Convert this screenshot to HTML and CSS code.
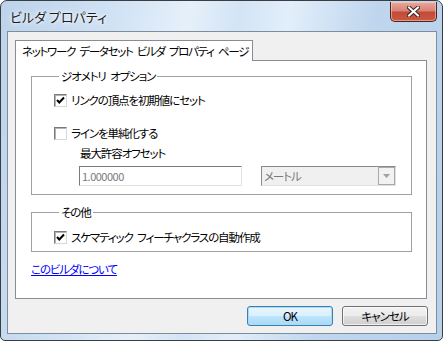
FILE: index.html
```html
<html>
<head>
  <title>ビルダ プロパティ</title>
  <link rel="stylesheet" href="styles.css">
</head>
<body>
  <div class="window">
    <!-- Aero title bar -->
    <div class="titlebar">
      <span class="title">ビルダ プロパティ</span>
      <button class="close-btn" aria-label="閉じる">
        <svg width="13" height="11" viewBox="0 0 13 11">
          <path d="M2 1.5 L11 9.5 M11 1.5 L2 9.5" stroke="#3a2420" stroke-width="4" stroke-linecap="square" fill="none"/>
          <path d="M2 1.5 L11 9.5 M11 1.5 L2 9.5" stroke="#ffffff" stroke-width="2" stroke-linecap="square" fill="none"/>
        </svg>
      </button>
    </div>

    <div class="client">
      <!-- Tab strip -->
      <div class="tabs">
        <div class="tab active">ネットワーク データセット ビルダ プロパティ ページ</div>
      </div>

      <!-- Tab page -->
      <div class="tab-page">
        <fieldset class="group geometry">
          <legend>ジオメトリ オプション</legend>
          <label class="check-row">
            <span class="checkbox">
              <svg width="11" height="11" viewBox="0 0 11 11"><path d="M2 5 L4.3 7.5 L9 2.5" stroke="#000" stroke-width="2" fill="none"/></svg>
            </span>
            <span>リンクの頂点を初期値にセット</span>
          </label>
          <label class="check-row simplify">
            <span class="checkbox"></span>
            <span>ラインを単純化する</span>
          </label>
          <div class="field-label">最大許容オフセット</div>
          <div class="offset-row">
            <div class="textbox disabled">1.000000</div>
            <div class="combo disabled">
              <span class="combo-text">メートル</span>
              <span class="combo-arrow">
                <svg width="7" height="4" viewBox="0 0 7 4"><path d="M0 0 H7 L3.5 4 Z" fill="#a0a0a0"/></svg>
              </span>
            </div>
          </div>
        </fieldset>

        <fieldset class="group other">
          <legend>その他</legend>
          <label class="check-row">
            <span class="checkbox">
              <svg width="11" height="11" viewBox="0 0 11 11"><path d="M2 5 L4.3 7.5 L9 2.5" stroke="#000" stroke-width="2" fill="none"/></svg>
            </span>
            <span>スケマティック フィーチャクラスの自動作成</span>
          </label>
        </fieldset>

        <a class="about-link" href="#">このビルダについて</a>
      </div>

      <!-- OK / Cancel -->
      <div class="dialog-buttons">
        <button class="btn default">OK</button>
        <button class="btn">キャンセル</button>
      </div>
    </div>
  </div>
</body>
</html>
```

FILE: styles.css
```css
/* Page */
body {
  margin: 0;
  background: #ffffff;
  font-family: "Noto Sans CJK JP", sans-serif;
  font-size: 11.5px;
  letter-spacing: -1.1px;
  word-spacing: 3px;
  font-feature-settings: "palt";
  color: #000;
}

/* Window frame with Aero glass look */
.window {
  width: 443px;
  height: 341px;
  box-sizing: border-box;
  border: 1px solid #3a3d42;
  border-radius: 7px 7px 5px 5px;
  padding: 0 5px 6px 6px;
  background: linear-gradient(100deg, #bcd3eb 0%, #cfe1f4 22%, #e6f0fa 38%, #d3e4f5 48%, #e2eefa 58%, #bfd6ee 75%, #b7d0ea 100%);
}

/* Title bar */
.titlebar {
  height: 30px;
  display: flex;
  align-items: flex-start;
}

.title {
  padding: 7px 0 0 3px;
  font-size: 13px;
  letter-spacing: 0;
  word-spacing: 0;
  line-height: 18px;
  color: #1b1b1b;
  text-shadow: 0 0 6px #ffffff, 0 0 3px #ffffff;
}

/* Red close button */
.close-btn {
  margin-left: auto;
  margin-top: 1px;
  width: 47px;
  height: 20px;
  padding: 0;
  border: 1px solid #50221d;
  border-top: none;
  border-radius: 0 0 5px 5px;
  background: linear-gradient(to bottom, #e7a99b 0%, #d78476 45%, #c44a37 55%, #c95a42 100%);
  box-shadow: inset 0 0 0 1px rgba(255, 220, 210, 0.5);
  display: flex;
  align-items: center;
  justify-content: center;
}

/* Client area */
.client {
  height: 303px;
  box-sizing: border-box;
  border: 1px solid #7f8c99;
  background: #f0f0f0;
  padding: 8px 8px 0 7px;
}

/* Tabs */
.tabs {
  display: flex;
}

.tab {
  position: relative;
  z-index: 1;
  width: 238px;
  height: 21px;
  box-sizing: border-box;
  margin-bottom: -1px;
  padding: 1px 0 0 6px;
  line-height: 18px;
  letter-spacing: -1.3px;
  white-space: nowrap;
  overflow: hidden;
  background: #ffffff;
  border: 1px solid #898c95;
  border-bottom: none;
}

.tab-page {
  width: 412px;
  height: 239px;
  box-sizing: border-box;
  border: 1px solid #898c95;
  background: #ffffff;
  padding-top: 8px;
}

/* Group boxes */
.group {
  margin: 0 14px 0 15px;
  padding: 0;
  border: 1px solid #a0a0a0;
  min-width: 0;
}

.group legend {
  margin-left: 5px;
  padding: 0 2px;
  line-height: 14px;
}

.geometry {
  padding: 9px 0 8px 22px;
}

.other {
  margin-top: 10px;
  padding: 10px 0 6px 22px;
}

/* Checkbox rows */
.check-row {
  display: flex;
  align-items: center;
  height: 16px;
  line-height: 16px;
  gap: 4px;
  white-space: nowrap;
}

.check-row.simplify {
  margin-top: 17px;
}

.checkbox {
  width: 13px;
  height: 13px;
  box-sizing: border-box;
  border: 1px solid;
  border-color: #7a7a7a #d8d8d8 #d8d8d8 #7a7a7a;
  box-shadow: inset 1px 1px 0 #b4b4b4;
  background: #ffffff;
  display: flex;
  align-items: center;
  justify-content: center;
}

.field-label {
  margin: 4px 0 0 26px;
  height: 16px;
  line-height: 16px;
}

/* Offset input row */
.offset-row {
  display: flex;
  gap: 19px;
  margin: 5px 0 0 25px;
}

.textbox {
  width: 163px;
  height: 20px;
  box-sizing: border-box;
  border: 1px solid;
  border-color: #7a7a7a #e3e3e3 #e3e3e3 #7a7a7a;
  background: #ffffff;
  padding-left: 2px;
  font-size: 11px;
  letter-spacing: -0.5px;
  line-height: 18px;
  color: #7a7a7a;
}

.combo {
  width: 135px;
  height: 20px;
  box-sizing: border-box;
  border: 1px solid;
  border-color: #8a8a8a #e0e0e0 #e0e0e0 #8a8a8a;
  background: #f0f0f0;
  display: flex;
  align-items: stretch;
}

.combo-text {
  flex: 1;
  padding-left: 2px;
  line-height: 18px;
  color: #7a7a7a;
}

.combo-arrow {
  width: 17px;
  box-sizing: border-box;
  border: 1px solid #a9a9a9;
  background: #f2f2f2;
  display: flex;
  align-items: center;
  justify-content: center;
}

/* About link */
.about-link {
  display: inline-block;
  margin: 9px 0 0 15px;
  line-height: 16px;
  color: #0000ff;
}

/* Dialog buttons */
.dialog-buttons {
  display: flex;
  justify-content: flex-end;
  gap: 9px;
  margin-top: 7px;
}

.btn {
  width: 86px;
  height: 20px;
  padding: 0;
  border: 1px solid #707070;
  border-radius: 3px;
  font-family: "Noto Sans CJK JP", sans-serif;
  font-size: 11.5px;
  letter-spacing: -1px;
  font-feature-settings: "palt";
  line-height: 16px;
  color: #000;
  background: linear-gradient(to bottom, #f2f2f2 0%, #ebebeb 50%, #dddddd 51%, #cfcfcf 100%);
  box-shadow: inset 0 0 0 1px rgba(255, 255, 255, 0.7);
}

.btn.default {
  border-color: #3c7fb1;
  background: linear-gradient(to bottom, #eaf6fd 0%, #d9f0fc 50%, #bee6fd 51%, #a7d9f5 100%);
  box-shadow: inset 0 0 0 1px #a8dcf6;
}
```
